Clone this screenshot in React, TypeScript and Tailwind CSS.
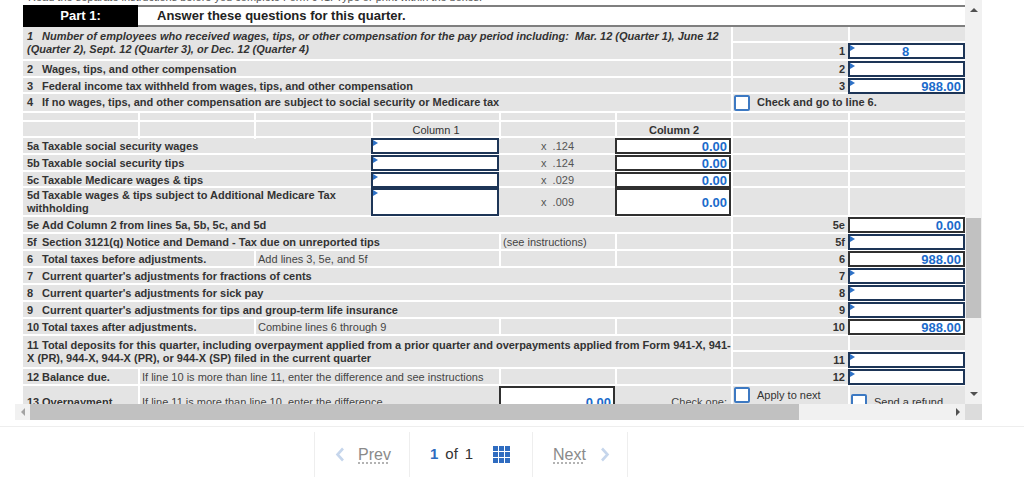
import React from "react";

const G = "grid grid-cols-[115px_116px_117px_128px_116px_116px_117px_117px]";
const ROW = "bg-[#e4e4e4] border-b-2 border-white text-[11px] text-[#333333]";
const L = "border-l-2 border-white";

function Flag() {
  return (
    <span className="absolute left-0 top-0 w-0 h-0 border-y-[3px] border-y-transparent border-l-[5px] border-l-[#2d71c6]" />
  );
}

function Inp({
  v = "",
  flag = false,
  dark = false,
  center = false,
  h = "h-[16px]",
}: {
  v?: string;
  flag?: boolean;
  dark?: boolean;
  center?: boolean;
  h?: string;
}) {
  return (
    <div
      className={`relative z-10 bg-white border-2 ${dark ? "border-[#303030]" : "border-[#1d3557]"} ${h} flex items-center ${center ? "justify-center" : "justify-end"} pr-[2px] text-[13px] font-bold text-[#1b6bcb] leading-none`}
    >
      {flag && <Flag />}
      {v}
    </div>
  );
}

function Cb() {
  return <span className="inline-block w-[16px] h-[16px] border-2 border-[#3d79c2] rounded-[2px] bg-white shrink-0" />;
}

function Num({ n }: { n: string }) {
  return <div className={`${L} flex items-center justify-end pr-[3px] font-bold`}>{n}</div>;
}

function Lbl({ n, t, span = "col-span-6" }: { n: string; t: string; span?: string }) {
  return (
    <div className={`${span} flex items-center pl-[4px] font-bold whitespace-nowrap`}>
      <span className="inline-block w-[15px]">{n}</span>
      {t}
    </div>
  );
}

function SimpleLine({ n, t, v = "", flag = true, h = "h-[17px]" }: { n: string; t: string; v?: string; flag?: boolean; h?: string }) {
  return (
    <div className={`${G} ${ROW} ${h}`}>
      <Lbl n={n} t={t} />
      <Num n={n} />
      <div>
        <Inp v={v} flag={flag} dark={!flag} />
      </div>
    </div>
  );
}

function FiveRow({ n, t, m, h = "h-[17px]", ih = "h-[16px]" }: { n: string; t: React.ReactNode; m: string; h?: string; ih?: string }) {
  return (
    <div className={`${G} ${ROW} ${h}`}>
      <div className="col-span-3 flex items-center pl-[4px] font-bold whitespace-nowrap leading-[13px]">
        <div>
          <span className="inline-block w-[15px]">{n}</span>
          {t}
        </div>
      </div>
      <div>
        <Inp flag h={ih} />
      </div>
      <div className="flex items-center pl-[42px] text-[#555555] whitespace-pre">{m}</div>
      <div>
        <Inp v="0.00" dark h={ih} />
      </div>
      <div className={L} />
      <div className={L} />
    </div>
  );
}

export default function App() {
  return (
    <div className="w-[1024px] h-[478px] bg-white overflow-hidden font-['Liberation_Sans',Arial,sans-serif]">
      <div className="flex pl-[15px] h-[420px]">
        <div className="w-[950px] flex flex-col">
          <div className="h-[404px] overflow-hidden pl-[8px]">
            {/* cut-off instructions line */}
            <div className="h-[5px] overflow-hidden">
              <p className="-mt-[9px] pl-[5px] text-[11px] leading-[13px] text-[#555555] whitespace-nowrap">
                Read the separate instructions before you complete Form 941. Type or print within the boxes.
              </p>
            </div>
            {/* Part 1 header */}
            <div className="flex h-[22px]">
              <div className="w-[115px] bg-black text-white font-bold text-[13px] flex items-center justify-center">Part 1:</div>
              <div className="flex-1 bg-white border-y-2 border-[#7f7f7f] flex items-center pl-[19px] font-bold text-[13px] text-[#222222]">
                Answer these questions for this quarter.
              </div>
            </div>

            {/* Row 1 */}
            <div className={`${G} ${ROW} h-[34px]`}>
              <div className="col-span-6 pl-[4px] pt-[3px] leading-[13px] font-bold italic whitespace-nowrap">
                <span className="inline-block w-[15px]">1</span>
                Number of employees who received wages, tips, or other compensation for the pay period including:&nbsp; Mar. 12 (Quarter 1), June 12
                <br />
                (Quarter 2), Sept. 12 (Quarter 3), or Dec. 12 (Quarter 4)
              </div>
              <div className={`${L} flex flex-col`}>
                <div className="h-[16px] border-b-2 border-white shrink-0" />
                <div className="flex-1 flex items-center justify-end pr-[3px] font-bold">1</div>
              </div>
              <div className="flex flex-col">
                <div className={`h-[16px] border-b-2 border-white shrink-0 ${L}`} />
                <Inp v="8" flag center />
              </div>
            </div>

            <SimpleLine n="2" t="Wages, tips, and other compensation" />
            <SimpleLine n="3" t="Federal income tax withheld from wages, tips, and other compensation" v="988.00" h="h-[16px]" />

            {/* Row 4 */}
            <div className={`${G} ${ROW} h-[19px]`}>
              <Lbl n="4" t="If no wages, tips, and other compensation are subject to social security or Medicare tax" />
              <div className={`col-span-2 ${L} flex items-center pl-[1px] gap-[7px] font-bold`}>
                <Cb />
                Check and go to line 6.
              </div>
            </div>

            {/* blank row */}
            <div className={`${G} ${ROW} h-[9px]`}>
              <div />
              <div className={L} />
              <div className={L} />
              <div className={L} />
              <div className={L} />
              <div className={L} />
              <div className={L} />
              <div className={L} />
            </div>

            {/* Column headers */}
            <div className={`${G} ${ROW} h-[16px]`}>
              <div />
              <div className={L} />
              <div className={L} />
              <div className={`${L} flex items-center justify-center`}>Column 1</div>
              <div className={L} />
              <div className={`${L} flex items-center justify-center font-bold`}>Column 2</div>
              <div className={L} />
              <div className={L} />
            </div>

            <FiveRow n="5a" t="Taxable social security wages" m="x  .124" />
            <FiveRow n="5b" t="Taxable social security tips" m="x  .124" />
            <FiveRow n="5c" t="Taxable Medicare wages & tips" m="x  .029" h="h-[16px]" />
            <FiveRow
              n="5d"
              t={
                <>
                  Taxable wages & tips subject to Additional Medicare Tax
                  <br />
                  withholding
                </>
              }
              m="x  .009"
              h="h-[29px]"
              ih="h-[28px]"
            />

            {/* 5e */}
            <div className={`${G} ${ROW} h-[17px]`}>
              <Lbl n="5e" t="Add Column 2 from lines 5a, 5b, 5c, and 5d" />
              <Num n="5e" />
              <div>
                <Inp v="0.00" dark />
              </div>
            </div>

            {/* 5f */}
            <div className={`${G} ${ROW} h-[17px]`}>
              <Lbl n="5f" t="Section 3121(q) Notice and Demand - Tax due on unreported tips" span="col-span-4" />
              <div className={`${L} flex items-center pl-[2px] font-normal text-[#444444]`}>(see instructions)</div>
              <div className={L} />
              <Num n="5f" />
              <div>
                <Inp flag />
              </div>
            </div>

            {/* 6 */}
            <div className={`${G} ${ROW} h-[17px]`}>
              <Lbl n="6" t="Total taxes before adjustments." span="col-span-2" />
              <div className={`col-span-2 ${L} flex items-center pl-[2px] text-[#444444]`}>Add lines 3, 5e, and 5f</div>
              <div className={L} />
              <div className={L} />
              <Num n="6" />
              <div>
                <Inp v="988.00" dark />
              </div>
            </div>

            <SimpleLine n="7" t="Current quarter's adjustments for fractions of cents" />
            <SimpleLine n="8" t="Current quarter's adjustments for sick pay" />
            <SimpleLine n="9" t="Current quarter's adjustments for tips and group-term life insurance" />

            {/* 10 */}
            <div className={`${G} ${ROW} h-[17px]`}>
              <Lbl n="10" t="Total taxes after adjustments." span="col-span-2" />
              <div className={`col-span-2 ${L} flex items-center pl-[2px] text-[#444444]`}>Combine lines 6 through 9</div>
              <div className={L} />
              <div className={L} />
              <Num n="10" />
              <div>
                <Inp v="988.00" dark />
              </div>
            </div>

            {/* 11 */}
            <div className={`${G} ${ROW} h-[33px]`}>
              <div className="col-span-6 pl-[4px] pt-[3px] leading-[13px] font-bold whitespace-nowrap">
                <span className="inline-block w-[15px]">11</span>
                Total deposits for this quarter, including overpayment applied from a prior quarter and overpayments applied from Form 941-X, 941-
                <br />
                X (PR), 944-X, 944-X (PR), or 944-X (SP) filed in the current quarter
              </div>
              <div className={`${L} flex flex-col`}>
                <div className="h-[16px] border-b-2 border-white shrink-0" />
                <div className="flex-1 flex items-center justify-end pr-[3px] font-bold">11</div>
              </div>
              <div className="flex flex-col">
                <div className={`h-[16px] border-b-2 border-white shrink-0 ${L}`} />
                <Inp flag />
              </div>
            </div>

            {/* 12 */}
            <div className={`${G} ${ROW} h-[17px]`}>
              <Lbl n="12" t="Balance due." span="col-span-1" />
              <div className={`col-span-3 ${L} flex items-center pl-[2px] text-[#444444] whitespace-nowrap`}>
                If line 10 is more than line 11, enter the difference and see instructions
              </div>
              <div className={L} />
              <div className={L} />
              <Num n="12" />
              <div>
                <Inp flag />
              </div>
            </div>

            {/* 13 */}
            <div className={`${G} ${ROW} h-[34px]`}>
              <Lbl n="13" t="Overpayment." span="col-span-1" />
              <div className={`col-span-3 ${L} flex items-center pl-[2px] text-[#444444] whitespace-nowrap`}>
                If line 11 is more than line 10, enter the difference
              </div>
              <div>
                <Inp v="0.00" dark h="h-[32px]" />
              </div>
              <div className="flex items-center justify-end pr-[4px] text-[#444444]">Check one:</div>
              <div className={`${L} flex items-start pl-[1px] pt-[1px] gap-[7px] text-[#333333] leading-[15px]`}>
                <Cb />
                <span className="mt-[1px]">
                  Apply to next
                  <br />
                  return.
                </span>
              </div>
              <div className={`${L} flex items-center pl-[1px] gap-[7px] text-[#333333]`}>
                <Cb />
                Send a refund.
              </div>
            </div>
          </div>

          {/* horizontal scrollbar */}
          <div className="h-[16px] bg-[#f1f1f1] flex items-center">
            <div className="w-[15px] flex justify-center">
              <span className="w-0 h-0 border-y-[4px] border-y-transparent border-r-[4px] border-r-[#a3a3a3]" />
            </div>
            <div className="h-full w-[769px] bg-[#c1c1c1]" />
            <div className="flex-1" />
            <div className="w-[15px] flex justify-center">
              <span className="w-0 h-0 border-y-[4px] border-y-transparent border-l-[4px] border-l-[#505050]" />
            </div>
          </div>
        </div>

        {/* vertical scrollbar */}
        <div className="w-[17px] flex flex-col">
          <div className="h-[404px] bg-[#f1f1f1] flex flex-col items-center">
            <span className="mt-[8px] w-0 h-0 border-x-[4px] border-x-transparent border-b-[4px] border-b-[#505050]" />
            <div className="mt-[206px] w-[15px] h-[100px] bg-[#c1c1c1]" />
            <span className="mt-auto mb-[8px] w-0 h-0 border-x-[4px] border-x-transparent border-t-[4px] border-t-[#505050]" />
          </div>
          <div className="h-[16px] bg-[#dcdcdc]" />
        </div>
      </div>

      {/* footer pagination */}
      <div className="mt-[6px] border-t border-[#eeeeee]">
        <div className="ml-[314px] mt-[5px] flex h-[45px]">
          <div className="w-[95px] border-l border-[#eeeeee] flex items-center pl-[20px]">
            <svg width="10" height="15" viewBox="0 0 10 15">
              <polyline points="8,1.5 2.5,7.5 8,13.5" fill="none" stroke="#c6d6ec" strokeWidth="2.6" />
            </svg>
            <span className="ml-[13px] text-[16px] text-[#8a8a8a] underline decoration-dotted decoration-[#9a9a9a] underline-offset-[3px]">
              Prev
            </span>
          </div>
          <div className="w-[123px] border-l border-[#eeeeee] flex items-center pl-[20px] text-[15px]">
            <span className="font-bold text-[#2f6cc0]">1</span>
            <span className="ml-[7px] text-[#333333]">of</span>
            <span className="ml-[7px] text-[#333333]">1</span>
            <div className="ml-[20px] grid grid-cols-3 gap-[1px]">
              {Array.from({ length: 9 }).map((_, i) => (
                <span key={i} className="w-[5px] h-[5px] bg-[#2f6cc0]" />
              ))}
            </div>
          </div>
          <div className="w-[96px] border-x border-[#eeeeee] flex items-center pl-[20px]">
            <span className="text-[16px] text-[#8a8a8a] underline decoration-dotted decoration-[#9a9a9a] underline-offset-[3px]">
              Next
            </span>
            <svg className="ml-[14px]" width="10" height="15" viewBox="0 0 10 15">
              <polyline points="2,1.5 7.5,7.5 2,13.5" fill="none" stroke="#c6d6ec" strokeWidth="2.6" />
            </svg>
          </div>
        </div>
      </div>
    </div>
  );
}
